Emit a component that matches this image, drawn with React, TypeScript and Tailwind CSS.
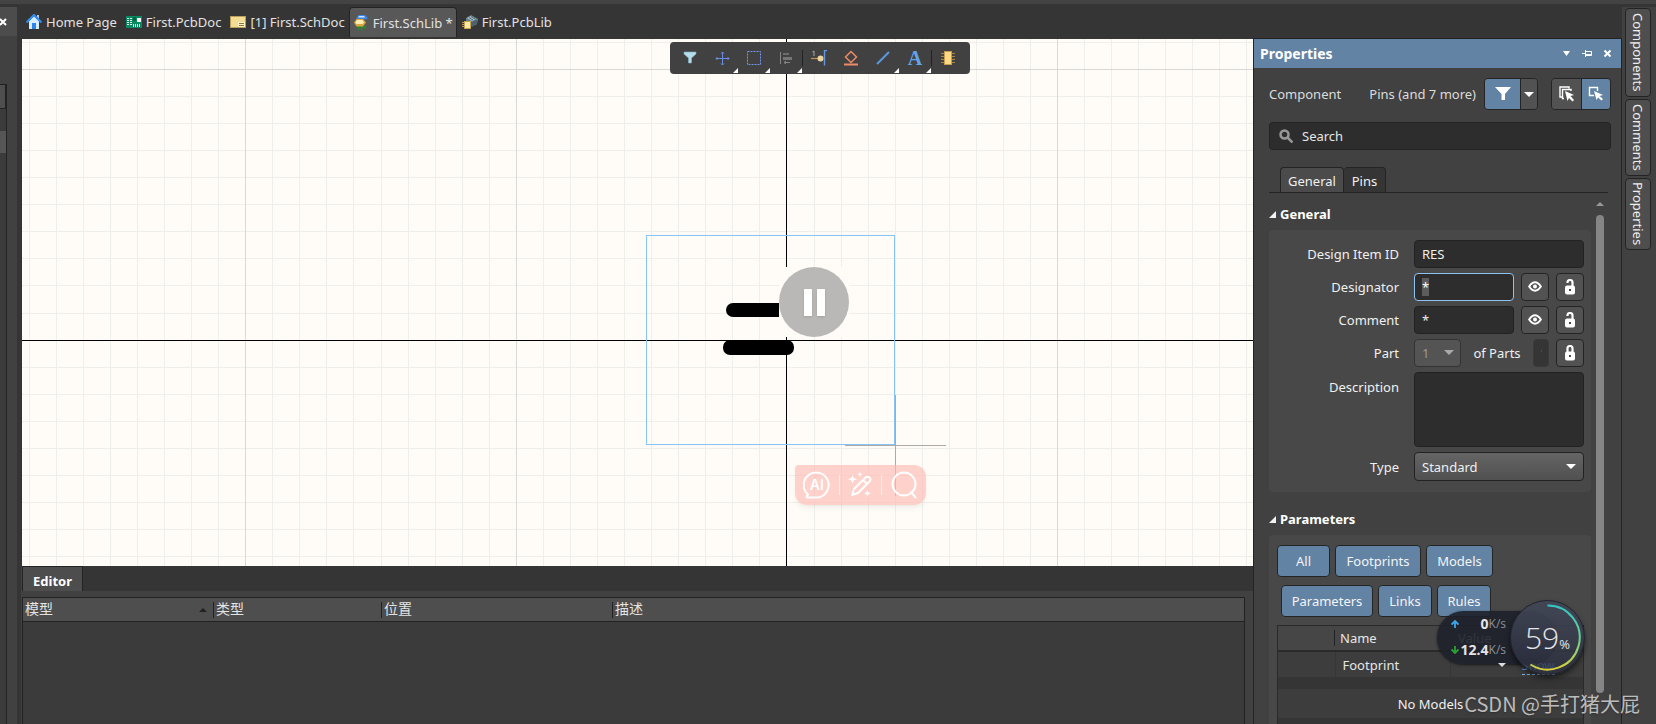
import { Fragment, useEffect, useRef } from "react";
import type { ReactNode } from "react";

const field =
  "h-7 min-w-0 rounded border border-[#222] bg-[#2d2d2d] px-[7px] text-[13px] text-[#f0f0f0] outline-none";
const iconButton =
  "flex h-7 w-7 shrink-0 items-center justify-center rounded border border-[#242424] bg-[#525252] text-white";
const label = "w-[130px] shrink-0 pr-0 text-right text-[#f0f0f0]";

function HomeIcon() {
  return (
    <svg width="16" height="16" viewBox="0 0 16 16">
      <rect x="11" y="1" width="2" height="5" fill="#b9c6cf" />
      <path d="M3 7 8 2l5 5v8H3z" fill="#d9ecfb" />
      <path d="M.5 8.5 8 1l7.500 7.500" fill="none" stroke="#2f8cf0" strokeWidth="2.200" />
      <rect x="6" y="9" width="4" height="6" fill="#2f86ea" />
    </svg>
  );
}
function PcbDocIcon() {
  return (
    <svg width="16" height="16" viewBox="0 0 16 16">
      <rect x="0" y="2" width="16" height="12" fill="#0b8a62" />
      <path d="M1 4.500h2M1 6.500h2M1 8.500h2M1 10.500h2M4 4.500h2M4 6.500h2M4 8.500h2M4 10.500h2" stroke="#d8f3e6" />
      <rect x="7" y="3" width="3" height="4" fill="#075f44" />
      <rect x="11" y="4" width="4" height="4" fill="#f1f7f3" />
      <path d="M7.500 10v3M9.500 10v3M11.500 10v3M13.500 10v3" stroke="#cdeedd" />
    </svg>
  );
}
function SchDocIcon() {
  return (
    <svg width="16" height="16" viewBox="0 0 16 16">
      <rect x=".5" y="2.500" width="15" height="11" fill="#f3dc93" stroke="#b99f5c" />
      <rect x="8" y="8" width="7" height="5" fill="#fff1c2" />
      <path d="M9 9.500h5M9 11.500h5" stroke="#8c7740" />
    </svg>
  );
}
function SchLibIcon() {
  return (
    <svg width="16" height="16" viewBox="0 0 16 16">
      <path d="M3 3.500 5.500 0H12l3 3-2 1.500H7z" fill="#3e83e6" />
      <path d="M6 1h5l1 1.500H5z" fill="#cfe4ff" />
      <path d="M4 12h9M5.500 11v4M8.500 11v5M11.500 11v3" stroke="#2a8a2e" strokeWidth="1.500" />
      <path d="M1 7.500 3.500 4H10l3 3.500-3 4H3.500z" fill="#d9a83d" />
      <path d="M2.500 7.500 4 5h5.500L11 7.500 9.500 9H3.500z" fill="#ffeeb0" />
    </svg>
  );
}
function PcbLibIcon() {
  return (
    <svg width="16" height="16" viewBox="0 0 16 16">
      <path d="m4 4 5-3 7 4-1 5-5 3-6-4z" fill="#66818d" />
      <path d="m5 4 4-2 5 3-4 2z" fill="#a9c0c9" />
      <path d="M7 3.500 11 6M9 2.500 13 5" stroke="#4f6873" />
      <path d="M10 8v5M12 7v5M14 6v4" stroke="#33454e" />
      <path d="M0 8.500h3M0 10.500h3M0 12.500h3" stroke="#c99a48" />
      <rect x="2.500" y="7.500" width="6" height="7" fill="#ffe9a3" stroke="#c6a253" />
    </svg>
  );
}

const docs: { name: string; icon: ReactNode; active?: boolean }[] = [
  { name: "Home Page", icon: <HomeIcon /> },
  { name: "First.PcbDoc", icon: <PcbDocIcon /> },
  { name: "[1] First.SchDoc", icon: <SchDocIcon /> },
  { name: "First.SchLib *", icon: <SchLibIcon />, active: true },
  { name: "First.PcbLib", icon: <PcbLibIcon /> },
];

const tools: { name: string; menu?: boolean; divider?: boolean; art: ReactNode }[] = [
  { name: "Filter", art: <path d="M2 2h12v2L9.500 8v5h-3V8L2 4z" fill="#b5dceb" stroke="#7fb0c4" strokeWidth=".6" /> },
  {
    name: "Move",
    menu: true,
    art: (
      <>
        <path d="M8.500 2v13M2 8.500h13" stroke="#6b8ddd" />
        <path d="m7 3.500 1.500-1.500L10 3.500M7 13.500 8.500 15l1.500-1.500M3.500 7 2 8.500 3.500 10M13.500 7 15 8.500 13.500 10" fill="none" stroke="#6b8ddd" />
      </>
    ),
  },
  { name: "Select", menu: true, art: <rect x="1.500" y="1.500" width="13" height="13" fill="none" stroke="#7396ea" strokeDasharray="2 1" /> },
  {
    name: "Align",
    menu: true,
    divider: true,
    art: (
      <>
        <path d="M2.500 2v12" stroke="#858585" />
        <rect x="5" y="3" width="6" height="2" fill="#6c6c6c" />
        <rect x="5" y="7" width="9" height="3" fill="#757575" />
        <path d="M6 12.500h6M8 11l-2 1.500L8 14" fill="none" stroke="#858585" />
      </>
    ),
  },
  {
    name: "Place Pin",
    art: (
      <>
        <path d="M0 8.500h11" stroke="#b9975a" strokeWidth="1.200" />
        <circle cx="9.500" cy="8.500" r="3" fill="#ecd49c" />
        <path d="M16 .5h-2.500v15" fill="none" stroke="#6496e8" strokeWidth="1.400" />
        <path d="m1.500 2 1.500-1v5" fill="none" stroke="#aaa" />
      </>
    ),
  },
  {
    name: "Place Symbol",
    art: (
      <>
        <path d="m8 1.500 5.500 5.500L8 12.500 2.500 7z" fill="none" stroke="#ee8a67" strokeWidth="1.500" />
        <path d="M1 14.500h14" stroke="#ee8a67" strokeWidth="2" />
      </>
    ),
  },
  { name: "Place Line", menu: true, art: <path d="M2 14 14 2" stroke="#5899df" strokeWidth="2" /> },
  { name: "Place Text", menu: true, divider: true, art: null },
  {
    name: "Place Part",
    art: (
      <>
        <path d="M1 3.500h14M1 6.500h14M1 9.500h14M1 12.500h14" stroke="#a58741" />
        <rect x="4.500" y="1.500" width="7" height="13" fill="#ffd983" stroke="#c39d4d" />
      </>
    ),
  },
];

function EyeIcon() {
  return (
    <svg width="14" height="12" viewBox="0 0 14 12">
      <path d="M1.200 5.500C3 2.700 4.800 1.300 7 1.300s4 1.400 5.800 4.200C11 8.300 9.200 9.700 7 9.700s-4-1.400-5.800-4.200z" fill="none" stroke="#fff" strokeWidth="2" />
      <circle cx="7" cy="5.500" r="2" fill="#fff" />
    </svg>
  );
}
function LockIcon({ open }: { open?: boolean }) {
  return (
    <svg width="12" height="16" viewBox="0 0 12 16">
      <path d={open ? "M3.500 4V3.500a2.500 2.500 0 0 1 5 0V8" : "M3.500 8V3.500a2.500 2.500 0 0 1 5 0V8"} fill="none" stroke="#fff" strokeWidth="2.200" />
      <rect x="1" y="6.500" width="10" height="9" rx="2" fill="#fff" />
      <rect x="5" y="10" width="2" height="2" fill="#444" />
    </svg>
  );
}
function Down({ className }: { className: string }) {
  return (
    <svg width="10" height="5" viewBox="0 0 10 5" className={className}>
      <path d="M0 0h10L5 5z" fill="currentColor" />
    </svg>
  );
}
function SectionTitle({ children }: { children: ReactNode }) {
  return (
    <h2 className="flex h-8 items-center gap-1 font-bold text-white">
      <svg width="7" height="7" viewBox="0 0 7 7">
        <path d="M7 0v7H0z" fill="#f2f2f2" />
      </svg>
      {children}
    </h2>
  );
}

const gridStep = (origin: number, pitch: number, from: number, to: number) =>
  Array.from({ length: to - from + 1 }, (_, i) => ({
    at: Math.floor(origin + pitch * (from + i)),
    major: (from + i) % 10 === 0,
  }));
const columns = gridStep(765.95, 27.06, -28, 80);
const rows = gridStep(301.15, 27.1, -11, 50);

function Grid({ major }: { major: boolean }) {
  return (
    <g fill={major ? "#d9d9d5" : "#eeeeea"}>
      {columns.filter((c) => c.major === major).map((c) => (
        <rect key={`c${c.at}`} x={c.at} y="0" width="1" height="100%" />
      ))}
      {rows.filter((r) => r.major === major).map((r) => (
        <rect key={`r${r.at}`} x="1" y={r.at} width="100%" height="1" />
      ))}
    </g>
  );
}

function Canvas() {
  return (
    <section className="relative min-h-0 flex-1 overflow-hidden bg-[#fffcf7] before:absolute before:inset-y-0 before:left-0 before:w-px before:bg-[#353535]">
      <svg className="absolute inset-0 h-full w-full" shapeRendering="crispEdges">
        <Grid major={false} />
        <Grid major />
        <rect x="765" y="0" width="1" height="100%" fill="#000" />
        <rect x="1" y="301" width="100%" height="1" fill="#000" />
        <rect x="625.500" y="196.500" width="248" height="209" fill="none" stroke="#86c3f7" />
        <path d="M824 406.500h101M874.500 356v101" stroke="#aaaaa7" />
        <rect x="705" y="264" width="70" height="14" rx="7" fill="#000" shapeRendering="auto" />
        <rect x="702" y="301" width="71" height="15" rx="7" fill="#000" shapeRendering="auto" />
        <rect x="758" y="228" width="70" height="70" fill="#fffcf7" />
      </svg>
      <div role="toolbar" className="absolute top-[3px] left-[649px] flex h-8 w-[300px] items-center rounded bg-[#414141] pl-1">
        {tools.map((t) => (
          <Fragment key={t.name}>
            <button aria-label={t.name} className="relative flex h-8 w-8 items-center justify-center">
              {t.art ? (
                <svg width="16" height="16" viewBox="0 0 16 16">
                  {t.art}
                </svg>
              ) : (
                <span className="font-['Liberation_Serif',serif] text-[20px] leading-5 font-bold text-[#63a4e8]">A</span>
              )}
              {t.menu && (
                <svg width="5" height="5" viewBox="0 0 5 5" className="absolute right-0 bottom-px">
                  <path d="M5 0v5H0z" fill="#fff" />
                </svg>
              )}
            </button>
            {t.divider && <span className="h-4 w-px bg-[#222]" />}
          </Fragment>
        ))}
      </div>
      <button aria-label="Pause" className="absolute top-[228px] left-[758px] flex h-[70px] w-[70px] items-center justify-center gap-[5px] rounded-full bg-[#b9b8b7]">
        <span className="h-[27px] w-2 bg-white shadow" />
        <span className="h-[27px] w-2 bg-white shadow" />
      </button>
      <div className="absolute top-[426px] left-[774px] grid h-10 w-[131px] grid-cols-3 items-center justify-items-center rounded-xl rounded-tl-sm bg-[#ffbab4]/65 shadow-md shadow-black/5">
        <button aria-label="AI" className="relative flex h-7 w-7 items-center justify-center">
          <svg width="28" height="28" viewBox="0 0 28 28" className="absolute inset-0" fill="none" stroke="#fff" strokeWidth="2">
            <path d="M5 23.500A12.500 12.500 0 1 1 14 26.500H4.500q-1.500-.3-.5-1.500z" strokeLinejoin="round" />
          </svg>
          <span className="relative font-['Inter',sans-serif] text-sm font-semibold text-white">AI</span>
        </button>
        <div className="flex w-full items-center justify-between">
          <span className="h-5 w-px bg-white/60" />
          <button aria-label="Magic pen">
            <svg width="24" height="26" viewBox="0 0 24 26" fill="none" stroke="#fff" strokeWidth="2" strokeLinejoin="round">
              <path d="m4 23 2-6L17.500 5.500a2.800 2.800 0 0 1 4 4L10 21zM15 8l4 4" />
              <path d="m4.500 3 1.200 3L9 7.200 5.700 8.400l-1.200 3-1.200-3L0 7.200 3.300 6zM12 0l.8 1.700 1.700.8-1.700.8L12 5l-.8-1.700-1.700-.8 1.700-.8zM19.500 18l1 2.200 2.300 1-2.300 1-1 2.300-1-2.300-2.300-1 2.300-1z" fill="#fff" stroke="none" />
            </svg>
          </button>
          <span className="h-5 w-px bg-white/60" />
        </div>
        <button aria-label="Find">
          <svg width="26" height="28" viewBox="0 0 26 28" fill="none" stroke="#fff" strokeWidth="2">
            <circle cx="13" cy="13" r="11.500" />
            <path d="m20 21 4.500 5.500" strokeLinecap="round" />
          </svg>
        </button>
      </div>
    </section>
  );
}

function EditorPane() {
  const th = "relative h-[23px] p-0 pl-[2px] text-left font-normal";
  return (
    <section className="flex h-[158px] shrink-0 flex-col bg-[#414141] pl-px">
      <div className="flex h-[25px] bg-[#353535]">
        <button className="h-full border-t border-r border-l border-[#232323] bg-[#4d4d4d] px-[10px] pt-[3px] font-bold text-white">Editor</button>
      </div>
      <div className="mt-[6px] mr-2 flex-1 border-t border-r border-l border-[#222] bg-[#3b3b3b]">
        <table className="w-full table-fixed border-collapse border-b border-[#222] bg-[#4e4e4e] text-sm leading-[22px] text-[#e4e4e4]">
          <colgroup>
            <col className="w-[191px]" />
            <col className="w-[168px]" />
            <col className="w-[231px]" />
            <col />
          </colgroup>
          <thead>
            <tr>
              {["模型", "类型", "位置", "描述"].map((h, i) => (
                <th key={h} className={th}>
                  {h}
                  {i === 0 && (
                    <svg width="8" height="4" viewBox="0 0 8 4" className="absolute top-[10px] right-[7px]">
                      <path d="M0 4h8L4 0z" fill="#222" />
                    </svg>
                  )}
                  {i < 3 && <span className="absolute top-1 right-0 h-4 w-px bg-[#222]" />}
                </th>
              ))}
            </tr>
          </thead>
        </table>
      </div>
    </section>
  );
}

function GeneralForm() {
  const designator = useRef<HTMLInputElement>(null);
  useEffect(() => {
    designator.current?.focus();
    designator.current?.select();
  }, []);
  return (
    <form className="flex flex-col gap-[5px] rounded bg-[#484848] px-[7px] pt-[10px] pb-[11px] pl-0">
      <div className="flex items-center gap-[15px]">
        <label htmlFor="item-id" className={label}>Design Item ID</label>
        <input id="item-id" className={`${field} flex-1`} defaultValue="RES" />
      </div>
      <div className="flex items-center gap-[15px]">
        <label htmlFor="designator" className={label}>Designator</label>
        <div className="flex min-w-0 flex-1 gap-[7px]">
          <input
            id="designator"
            ref={designator}
            className="h-7 min-w-0 flex-1 rounded border border-[#90c2f0] bg-[#2d2d2d] px-[7px] text-[13px] text-[#f0f0f0] outline-none selection:bg-[#5c5c5c] selection:text-white"
            defaultValue="*"
          />
          <button type="button" aria-label="Show designator" className={iconButton}><EyeIcon /></button>
          <button type="button" aria-label="Lock designator" className={iconButton}><LockIcon open /></button>
        </div>
      </div>
      <div className="flex items-center gap-[15px]">
        <label htmlFor="comment" className={label}>Comment</label>
        <div className="flex min-w-0 flex-1 gap-[7px]">
          <input id="comment" className={`${field} flex-1`} defaultValue="*" />
          <button type="button" aria-label="Show comment" className={iconButton}><EyeIcon /></button>
          <button type="button" aria-label="Lock comment" className={iconButton}><LockIcon open /></button>
        </div>
      </div>
      <div className="flex items-center gap-[15px]">
        <label htmlFor="part" className={label}>Part</label>
        <div className="flex min-w-0 flex-1 items-center gap-[7px]">
          <span className="relative flex">
            <select id="part" disabled className="h-7 w-[47px] appearance-none rounded border border-[#333] bg-[#545454] px-[7px] text-[13px] text-[#999] opacity-100">
              <option>1</option>
            </select>
            <Down className="pointer-events-none absolute top-[11px] right-[7px] text-[#aaa]" />
          </span>
          <label htmlFor="parts" className="flex-1 text-center text-[#f0f0f0]">of Parts</label>
          <input id="parts" disabled defaultValue="1" className="h-7 w-4 rounded border border-[#3a3a3a] bg-[#353535] px-[6px] text-[13px] text-[#6d7f8f]" />
          <button type="button" aria-label="Lock parts" className={iconButton}><LockIcon /></button>
        </div>
      </div>
      <div className="flex items-start gap-[15px]">
        <label htmlFor="description" className={`${label} pt-[6px]`}>Description</label>
        <textarea id="description" className="h-[75px] min-w-0 flex-1 resize-none rounded border border-[#222] bg-[#2d2d2d] outline-none" />
      </div>
      <div className="flex items-center gap-[15px]">
        <label htmlFor="type" className={label}>Type</label>
        <span className="relative flex min-w-0 flex-1">
          <select id="type" className="h-[29px] w-full appearance-none rounded border border-[#222] bg-linear-to-b from-[#656565] to-[#505050] px-[7px] text-[13px] text-[#f0f0f0] outline-none">
            <option>Standard</option>
          </select>
          <Down className="pointer-events-none absolute top-3 right-2 text-white" />
        </span>
      </div>
    </form>
  );
}

const chip = "h-8 rounded border border-[#242424] bg-[#6283a4] text-[#f4f4f4]";

function Parameters() {
  return (
    <div className="flex flex-1 flex-col rounded-t bg-[#484848] pt-[10px] pr-[7px] pl-2">
      <div className="flex gap-[5px]">
        <button className={`${chip} w-[53px]`}>All</button>
        <button className={`${chip} w-[86px]`}>Footprints</button>
        <button className={`${chip} w-[67px]`}>Models</button>
      </div>
      <div className="mt-2 flex gap-[5px] pl-1">
        <button className={`${chip} w-[92px]`}>Parameters</button>
        <button className={`${chip} w-[54px]`}>Links</button>
        <button className={`${chip} w-[54px]`}>Rules</button>
      </div>
      <div className="mt-2 flex-1 border border-b-0 border-[#2a2a2a] bg-[#353535]">
        <table className="w-full table-fixed border-collapse text-[#e6e6e6]">
          <colgroup>
            <col className="w-[57px]" />
            <col className="w-[115px]" />
            <col />
          </colgroup>
          <thead>
            <tr className="h-[25px] border-b-2 border-[#2a2a2a] bg-[#464646]">
              <th><span className="ml-auto block h-4 w-px bg-[#222]" /></th>
              <th className="pl-[5px] text-left font-normal">Name</th>
              <th className="pl-2 text-left font-normal">Value</th>
            </tr>
          </thead>
          <tbody>
            <tr className="h-[26px] bg-[#3d3d3d]">
              <td className="border-r border-[#363636]" />
              <td className="border-r border-[#363636] pl-[7px]">Footprint</td>
              <td className="pl-[71px]"><a href="#show" className="border-b border-dashed border-[#80b8f0] text-[#6aa5e6]">Show</a></td>
            </tr>
            <tr className="h-3"><td colSpan={3} /></tr>
            <tr className="h-[29px] bg-[#3d3d3d]"><td colSpan={3} className="text-center text-[#f0f0f0]">No Models</td></tr>
          </tbody>
        </table>
      </div>
    </div>
  );
}

function PropertiesPanel() {
  return (
    <aside className="flex w-[369px] shrink-0 flex-col border-x border-t border-[#232323] bg-[#414141]">
      <header className="flex h-[29px] shrink-0 items-center bg-[#6283a4] pr-[9px] pl-[6px] text-white">
        <h1 className="flex-1 text-sm font-bold">Properties</h1>
        <div className="flex gap-[11px]">
          <button aria-label="Panel menu">
            <svg width="9" height="9" viewBox="0 0 9 9"><path d="M1 2h7L4.500 7z" fill="#fff" /></svg>
          </button>
          <button aria-label="Pin panel">
            <svg width="10" height="9" viewBox="0 0 10 9" fill="none" stroke="#fff"><path d="M0 4.500h4M3.500 1v7M4 2.500h5.500v4H4M4 5.500h5" /></svg>
          </button>
          <button aria-label="Close panel">
            <svg width="9" height="9" viewBox="0 0 9 9"><path d="m1.500 1.500 6 6m0-6-6 6" stroke="#fff" strokeWidth="2" /></svg>
          </button>
        </div>
      </header>
      <div className="flex shrink-0 items-center pt-[10px] pr-[10px] pl-[15px] text-[#dcdcdc]">
        <span className="flex-1">Component</span>
        <span>Pins (and 7 more)</span>
        <div className="ml-2 flex h-8 overflow-hidden rounded border border-[#242424]">
          <button aria-label="Filter" className="flex w-[35px] items-center justify-center bg-[#6283a4]">
            <svg width="16" height="14" viewBox="0 0 16 14"><path d="M0 0h16l-6 7v6H6.500V7z" fill="#fff" /></svg>
          </button>
          <button aria-label="Filter options" className="flex w-[17px] items-center justify-center border-l border-[#242424] bg-[#525252]">
            <Down className="text-white" />
          </button>
        </div>
        <div className="ml-[13px] flex h-8 overflow-hidden rounded border border-[#242424]">
          <button aria-label="Select all kinds" className="flex w-[29px] items-center justify-center bg-[#525252]">
            <svg width="16" height="16" viewBox="0 0 16 16">
              <path d="M3 11H1V1h9v1.500M5 12.500H3.500v-9H12V5" fill="none" stroke="#fff" strokeWidth="1.400" />
              <path d="m6 5 9 4-3.500 1L15 14l-1.500 1.500L10 12l-1.500 3z" fill="#fff" />
            </svg>
          </button>
          <button aria-label="Select filtered" className="flex w-[29px] items-center justify-center border-l border-[#242424] bg-[#6283a4]">
            <svg width="16" height="16" viewBox="0 0 16 16">
              <path d="M6 9.500H1.500V1.500h8V5" fill="none" stroke="#fff" strokeWidth="1.400" />
              <path d="m6 5 9 4-3.500 1L15 13l-1.500 1.500L10 11.500 8.500 14z" fill="#fff" />
            </svg>
          </button>
        </div>
      </div>
      <label className="mt-3 mr-[10px] ml-[15px] flex h-7 shrink-0 items-center gap-[9px] rounded border border-[#232323] bg-[#2d2d2d] px-[9px]">
        <svg width="14" height="14" viewBox="0 0 14 14" fill="none" stroke="#979797" strokeWidth="2.500">
          <circle cx="5.500" cy="5.500" r="4" />
          <path d="m8.500 8.500 5 5" />
        </svg>
        <input aria-label="Search" placeholder="Search" className="min-w-0 flex-1 bg-transparent text-[13px] outline-none placeholder:text-[#e6e6e6]" />
      </label>
      <nav className="mt-[17px] mr-[13px] ml-[15px] flex h-[26px] shrink-0 border-b border-[#232323] pl-[11px] text-[#f0f0f0]">
        <button className="w-[64px] rounded-t border border-b-0 border-[#242424] bg-[#4b4b4b] pt-[2px]">General</button>
        <button className="w-[42px] rounded-t border border-b-0 border-l-0 border-[#242424] bg-[#353535] pt-[2px]">Pins</button>
      </nav>
      <div className="mr-[17px] ml-[15px] flex min-h-0 flex-1 gap-[5px] overflow-hidden">
        <div className="flex min-w-0 flex-1 flex-col pt-[5px]">
          <SectionTitle>General</SectionTitle>
          <GeneralForm />
          <div className="mt-[11px]">
            <SectionTitle>Parameters</SectionTitle>
          </div>
          <Parameters />
        </div>
        <div className="flex w-2 shrink-0 flex-col items-center gap-[9px] pt-[9px] pb-[31px]">
          <svg width="8" height="4" viewBox="0 0 8 4"><path d="M0 4h8L4 0z" fill="#999" /></svg>
          <span className="w-2 flex-1 rounded-full bg-[#858585]" />
        </div>
      </div>
    </aside>
  );
}

function NetworkWidget() {
  return (
    <div className="absolute right-[71px] bottom-[49px] h-[75px] w-[148px] font-['Open_Sans',sans-serif] text-[#e4e4e8]">
      <div className="absolute top-[11px] left-0 h-[53px] w-[120px] rounded-full bg-[#1d202a]/90 shadow shadow-black/50">
        <div className="flex h-[26px] w-[69px] items-center justify-end">
          <svg width="8" height="8" viewBox="0 0 8 8" className="mr-auto ml-[14px]"><path d="M4 8V1M.500 4.500 4 1l3.500 3.500" fill="none" stroke="#3aa7e8" strokeWidth="1.800" /></svg>
          <b className="text-sm font-bold">0</b>
          <span className="text-[12px] text-[#8d9096]">K/s</span>
        </div>
        <div className="flex h-[26px] w-[69px] items-center justify-end">
          <svg width="8" height="8" viewBox="0 0 8 8" className="mr-auto ml-[14px] shrink-0"><path d="M4 0v7M.500 3.500 4 7l3.500-3.500" fill="none" stroke="#29a236" strokeWidth="1.800" /></svg>
          <b className="text-sm font-bold">12.4</b>
          <span className="text-[12px] text-[#8d9096]">K/s</span>
        </div>
        <svg width="8" height="4" viewBox="0 0 8 4" className="absolute bottom-[-3px] left-[61px]"><path d="M0 0h8L4 4z" fill="#ddd" /></svg>
      </div>
      <div className="absolute top-0 right-0 flex h-[75px] w-[75px] items-center justify-center rounded-full border border-[#20232e] bg-linear-to-b from-[#414656]/95 to-[#2a2e3d]/75 shadow-md shadow-black/50">
        <svg width="73" height="73" viewBox="0 0 73 73" className="absolute inset-0">
          <defs>
            <linearGradient id="ring" x1="0" y1="0" x2="0" y2="1">
              <stop offset="0" stopColor="#35c3c6" />
              <stop offset=".55" stopColor="#6fd08c" />
              <stop offset="1" stopColor="#d6cf3c" />
            </linearGradient>
          </defs>
          <path d="M36.500 4.500a32 32 0 1 1-17 59" fill="none" stroke="url(#ring)" strokeWidth="2" />
        </svg>
        <span className="relative text-[30px] leading-8 font-light">59</span>
        <span className="relative pt-3 text-[13px]">%</span>
      </div>
    </div>
  );
}

export default function App() {
  return (
    <div className="relative flex h-screen flex-col overflow-hidden bg-[#353535] pt-1 font-['Noto_Sans','Noto_Sans_CJK_SC',sans-serif] text-[13px] leading-[18px] before:absolute before:inset-x-0 before:top-0 before:h-1 before:bg-[#434343]">
      <div className="flex min-h-0 flex-1">
        <aside className="mt-[3px] mr-1 flex w-[17px] shrink-0 flex-col bg-[#414141]">
          <button aria-label="Close" className="flex h-[29px] items-center bg-[#4c4c4c]">
            <svg width="7" height="8" viewBox="0 0 7 8"><path d="m0 1 6 6m0-6L0 7" stroke="#fff" strokeWidth="2" /></svg>
          </button>
          <div className="mt-12 flex w-[7px] flex-1 flex-col border-t border-r border-[#222] bg-[#3b3b3b]">
            <span className="h-6 border-r border-b border-[#222] bg-[#4e4e4e]" />
            <span className="mt-[22px] h-[22px] bg-[#565656]" />
          </div>
        </aside>
        <div className="flex min-w-0 flex-1 flex-col">
          <nav className="flex h-[35px] shrink-0 items-start pt-[3px] text-[#e2e2e2]">
            {docs.map((d) => (
              <a
                key={d.name}
                href="#doc"
                className={
                  d.active
                    ? "flex h-[30px] shrink-0 items-center gap-1 rounded-t border border-b-0 border-[#242424] bg-[#585858] px-[3px]"
                    : "flex h-[30px] shrink-0 items-center gap-1 pr-1 pl-[5px]"
                }
              >
                {d.icon}
                <span className="whitespace-nowrap">{d.name}</span>
              </a>
            ))}
          </nav>
          <main className="flex min-h-0 min-w-0 flex-1 flex-col">
            <Canvas />
            <EditorPane />
          </main>
        </div>
        <div className="flex pt-[34px]">
          <PropertiesPanel />
        </div>
        <nav className="mt-[3px] flex w-[34px] shrink-0 flex-col gap-[2px] bg-[#414141] pt-px pl-[3px]">
          {[
            ["Components", "h-[89px]"],
            ["Comments", "h-[77px]"],
            ["Properties", "h-[72px]"],
          ].map(([name, size]) => (
            <button key={name} className={`${size} flex w-[26px] items-center justify-center rounded border border-[#232323] bg-[#4e4e4e] text-[#ededed] [writing-mode:vertical-rl]`}>
              {name}
            </button>
          ))}
        </nav>
      </div>
      <NetworkWidget />
      <p className="absolute right-4 bottom-[6px] font-['Noto_Sans_CJK_SC',sans-serif] text-[20px] leading-7 whitespace-nowrap text-[#bcbcbc] text-shadow-sm">CSDN @手打猪大屁</p>
    </div>
  );
}
